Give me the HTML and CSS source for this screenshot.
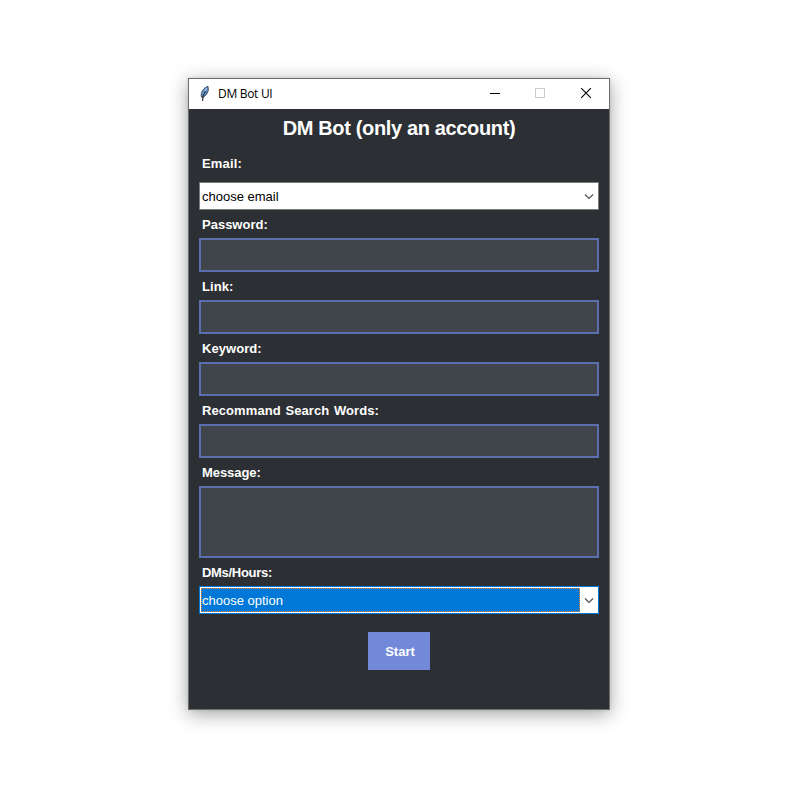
FILE: index.html
```html
<!DOCTYPE html>
<html lang="en">
<head>
<meta charset="utf-8">
<title>DM Bot UI</title>
<link rel="stylesheet" href="styles.css">
</head>
<body>
<main class="window">
  <header class="titlebar">
    <svg class="feather" width="12" height="17" viewBox="0 0 12 17">
      <path d="M2.500 12C1.500 9 3 5 6.500 2.500L9 1.300L9.300 5.500L7.500 9.500L4 12.500Z" fill="#5b8fd0" stroke="#3a424d" stroke-width=".9"/>
      <path d="M7.800 3L4.500 9" stroke="#a5c9f0" stroke-width="1.200" fill="none"/>
      <path d="M6.500 6L4 11L3.600 16" stroke="#111" stroke-width="1" fill="none"/>
    </svg>
    <span class="caption">DM Bot UI</span>
    <div class="controls">
      <svg width="46" height="30" viewBox="0 0 46 30"><path d="M19 14.500H29" stroke="#000"/></svg>
      <svg width="46" height="30" viewBox="0 0 46 30"><rect x="18.500" y="9.500" width="9" height="9" fill="none" stroke="#ccc"/></svg>
      <svg width="46" height="30" viewBox="0 0 46 30"><path d="M18.200 9.200L27.800 18.800M27.800 9.200L18.200 18.800" stroke="#000" stroke-width="1.100"/></svg>
    </div>
  </header>
  <section class="form">
    <h1 class="title"><span>DM Bot (only an account)</span></h1>
    <div class="label label-email">Email:</div>
    <div class="combo">
      <div class="value">choose email</div>
      <svg class="arrow" width="18" height="26" viewBox="0 0 18 26"><path d="M5 11.500L9 15.500L13 11.500" fill="none" stroke="#505050" stroke-width="1.200"/></svg>
    </div>
    <div class="label label-password">Password:</div>
    <div class="entry"></div>
    <div class="label label-link">Link:</div>
    <div class="entry"></div>
    <div class="label label-keyword">Keyword:</div>
    <div class="entry"></div>
    <div class="label label-search">Recommand Search Words:</div>
    <div class="entry"></div>
    <div class="label label-message">Message:</div>
    <div class="entry entry-tall"></div>
    <div class="label label-rate">DMs/Hours:</div>
    <div class="combo combo-focus">
      <div class="value">choose option</div>
      <svg class="arrow" width="18" height="26" viewBox="0 0 18 26"><path d="M5 11.500L9 15.500L13 11.500" fill="none" stroke="#505050" stroke-width="1.200"/></svg>
    </div>
    <button class="start">Start</button>
  </section>
</main>
</body>
</html>
```
FILE: styles.css
```css
* { box-sizing: border-box; }
body {
  margin: 0;
  height: 787px;
  padding: 78px 0 0 188px;
  background: #fff;
  font-family: "Liberation Sans", Arial, sans-serif;
}
.window {
  width: 422px;
  height: 632px;
  border: 1px solid #6d6e70;
  background: #2c2f33;
  box-shadow: 0 4px 18px rgba(0, 0, 0, .36), 0 0 3px rgba(0, 0, 0, .12);
}
.titlebar {
  display: flex;
  height: 30px;
  padding-left: 10px;
  background: #fff;
}
.feather { margin-top: 6px; }
.caption {
  margin-left: 7px;
  font: 12px/29px "Open Sans", sans-serif;
  letter-spacing: -.3px;
  color: #000;
}
.controls { display: flex; margin-left: auto; }
.form {
  display: flex;
  flex-direction: column;
  padding: 0 10px;
}
.title {
  margin: 0;
  height: 40px;
  text-align: center;
  font-size: 20px;
  line-height: 38px;
  letter-spacing: -.35px;
  color: #fff;
}
.label {
  height: 28px;
  padding-left: 3px;
  font-size: 13px;
  font-weight: bold;
  line-height: 30px;
  color: #fff;
}
.label-email { margin-bottom: 5px; letter-spacing: .15px; }
.label-link { letter-spacing: .1px; }
.label-keyword { letter-spacing: .06px; }
.label-search { letter-spacing: .08px; word-spacing: 1px; }
.label-message { letter-spacing: -.06px; }
.label-rate { letter-spacing: -.3px; }
.combo {
  display: flex;
  height: 28px;
  border: 1px solid #7a7a7a;
  background: #fff;
}
.value {
  flex: 1;
  padding-left: 2px;
  font-size: 13px;
  line-height: 27px;
  color: #000;
}
.combo-focus { border-color: #0078d7; }
.combo-focus .value {
  margin: 1px 0 1px 1px;
  padding-left: 0;
  border: 1px dotted #ff8728;
  background: #0078d7;
  line-height: 23px;
  color: #fff;
}
.entry {
  height: 34px;
  border: 2px solid #5b6eae;
  background: #40444b;
}
.entry-tall { height: 72px; }
.start {
  align-self: center;
  width: 62px;
  height: 38px;
  margin: 18px 0 0;
  padding: 1px 0 0 2px;
  border: 0;
  background: #7289da;
  color: #fff;
  font: bold 13px/37px "Liberation Sans", Arial, sans-serif;
}
```
